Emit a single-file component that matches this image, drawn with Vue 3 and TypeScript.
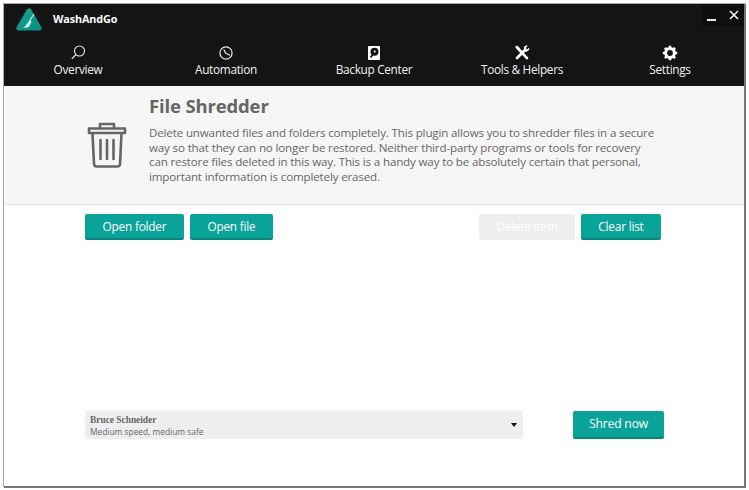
<script setup lang="ts">
interface NavItem { label: string; icon: string }
const nav: NavItem[] = [
  { label: 'Overview', icon: 'search' },
  { label: 'Automation', icon: 'clock' },
  { label: 'Backup Center', icon: 'disk' },
  { label: 'Tools & Helpers', icon: 'tools' },
  { label: 'Settings', icon: 'gear' },
]
</script>

<template>
  <div class="window">
    <header class="top">
      <div class="titlebar">
        <div class="brand">
          <svg class="logo" width="28" height="25" viewBox="0 0 28 25">
            <defs>
              <linearGradient id="lg" x1="0" y1="0" x2="1" y2="1">
                <stop offset="0" stop-color="#16a594"/>
                <stop offset="1" stop-color="#0b8a80"/>
              </linearGradient>
            </defs>
            <path d="M14 1.5 C15 1.5 15.8 2 16.4 3 L26.3 20 C27.4 22 26.4 23.5 24.3 23.5 L3.7 23.5 C1.6 23.5 .6 22 1.7 20 L11.6 3 C12.2 2 13 1.5 14 1.5Z" fill="url(#lg)"/>
            <path d="M19 7 L14.5 14" stroke="#d8f2ee" stroke-width="1.1"/>
            <path d="M14.5 13 L16.5 15 L14 20 L8 21 C10.5 19 12 17 14.5 13Z" fill="#d8f2ee"/>
          </svg>
          <span class="appname">WashAndGo</span>
        </div>
        <div class="winbtns">
          <button class="winbtn"><span class="minus"></span></button>
          <button class="winbtn">
            <svg width="10" height="10" viewBox="0 0 10 10"><path d="M1 1 L9 9 M9 1 L1 9" stroke="#fff" stroke-width="1.5"/></svg>
          </button>
        </div>
      </div>
      <nav class="nav">
        <div v-for="item in nav" :key="item.label" class="navitem">
          <svg class="navicon" width="18" height="18" viewBox="0 0 18 18">
            <template v-if="item.icon === 'search'">
              <circle cx="10.5" cy="7" r="5" fill="none" stroke="#e8e8e8" stroke-width="1.1"/>
              <path d="M7 10.5 L2.8 14.8" stroke="#e8e8e8" stroke-width="1.2"/>
            </template>
            <template v-else-if="item.icon === 'clock'">
              <circle cx="9" cy="9" r="6.1" fill="none" stroke="#e8e8e8" stroke-width="1.2"/>
              <path d="M6.8 5.6 L8.8 9.4 L13 11.2" fill="none" stroke="#e8e8e8" stroke-width="1.2"/>
            </template>
            <template v-else-if="item.icon === 'disk'">
              <rect x="3" y="2" width="12" height="14" rx=".8" fill="#fff"/>
              <circle cx="9.5" cy="7.8" r="4" fill="#111"/>
              <path d="M9 9 L5.5 13.5" stroke="#111" stroke-width="1.6"/>
              <circle cx="9.7" cy="7.6" r="1" fill="#fff"/>
            </template>
            <template v-else-if="item.icon === 'tools'">
              <path d="M4.5 4 L14 14.2" stroke="#fff" stroke-width="2.6" stroke-linecap="round"/>
              <path d="M2 3 L4 1.5 L7 4.2 L5 6Z" fill="#fff"/>
              <path d="M11.5 6.5 L4 14" stroke="#fff" stroke-width="2.8" stroke-linecap="round"/>
              <path d="M10.8 3.2 A3.4 3.4 0 0 1 14.8 1.8 L12.8 3.9 L14.2 5.4 L16.2 3.4 A3.4 3.4 0 0 1 11.6 7.4Z" fill="#fff"/>
            </template>
            <template v-else>
              <circle cx="9" cy="9" r="4.4" fill="none" stroke="#fff" stroke-width="3"/>
              <path d="M9 1.8 V16.2 M1.8 9 H16.2 M3.9 3.9 L14.1 14.1 M14.1 3.9 L3.9 14.1" stroke="#fff" stroke-width="2.6" stroke-dasharray="2.6 9.2"/>
            </template>
          </svg>
          <span class="navlabel">{{ item.label }}</span>
        </div>
      </nav>
    </header>

    <section class="intro">
      <svg class="trash" width="40" height="46" viewBox="0 0 40 46" fill="none" stroke="#666" stroke-width="2.6" stroke-linejoin="round" stroke-linecap="round">
        <path d="M2 8.5 V6.5 H38 V11 H2Z"/>
        <path d="M13 6 V2 H27 V6"/>
        <path d="M5.5 11.5 L7 42 Q7.2 44.5 9.5 44.5 H30.5 Q32.8 44.5 33 42 L34.5 11.5"/>
        <path d="M13.5 18 V37 M20 18 V37 M26.5 18 V37"/>
      </svg>
      <div class="introtext">
        <h1>File Shredder</h1>
        <p>Delete unwanted files and folders completely. This plugin allows you to shredder files in a secure<br>way so that they can no longer be restored. Neither third-party programs or tools for recovery<br>can restore files deleted in this way. This is a handy way to be absolutely certain that personal,<br>important information is completely erased.</p>
      </div>
    </section>

    <main class="content">
      <div class="toolbar">
        <div class="group">
          <button class="btn w-folder">Open folder</button>
          <button class="btn w-file">Open file</button>
        </div>
        <div class="group">
          <button class="btn disabled w-delete">Delete item</button>
          <button class="btn w-clear">Clear list</button>
        </div>
      </div>
      <div class="bottom">
        <div class="select">
          <div class="seltext">
            <strong>Bruce Schneider</strong>
            <span>Medium speed, medium safe</span>
          </div>
          <span class="caret"></span>
        </div>
        <button class="btn shred">Shred now</button>
      </div>
    </main>
  </div>
</template>

<style>
html, body { margin: 0; background: #fff; height: 490px; overflow: hidden; }
</style>

<style scoped>
.window {
  box-sizing: border-box;
  width: 740px;
  height: 482px;
  margin: 4px 0 0 4px;
  background: #fff;
  display: flex;
  flex-direction: column;
  font-family: "Open Sans", "Noto Sans", sans-serif;
  box-shadow: 1px 1px 0 1px #777, 0 0 0 1px #a8a8a8;
}
.top { height: 82px; background: #141414; color: #fff; display: flex; flex-direction: column; }
.titlebar { height: 36px; display: flex; justify-content: space-between; align-items: flex-start; }
.brand { display: flex; align-items: center; gap: 10px; padding: 3px 0 0 11px; }
.logo { display: block; }
.appname { font-size: 10.8px; font-weight: 700; letter-spacing: -.1px; margin-top: -3px; }
.winbtns { display: flex; }
.winbtn { width: 21px; height: 22px; background: #0e0e0e; border: 0; padding: 0; margin-left: 1px; display: flex; align-items: center; justify-content: center; }
.minus { width: 9px; height: 2px; background: #e8e8e8; margin-top: 10px; }
.nav { display: flex; }
.navitem { width: 148px; display: flex; flex-direction: column; align-items: center; }
.navicon { display: block; margin-top: 4px; }
.navlabel { font-size: 11.8px; line-height: 16px; margin-top: -1px; letter-spacing: -.3px; color: #f2f2f2; white-space: nowrap; }
.intro { box-sizing: border-box; height: 119px; background: #f6f6f6; border-bottom: 1px solid #e6e6e6; display: flex; }
.trash { margin: 36px 0 0 83px; }
.introtext { margin-left: 22px; }
h1 { margin: 7px 0 0; font-size: 18.5px; line-height: 26px; font-weight: 700; color: #666; letter-spacing: -.15px; }
p { margin: 7px 0 0; font-size: 11.6px; line-height: 14.5px; color: #666; white-space: nowrap; letter-spacing: -.16px; }
.content { flex: 1; display: flex; flex-direction: column; justify-content: space-between; padding: 9px 0 47px 81px; }
.toolbar { display: flex; justify-content: space-between; width: 576px; }
.group { display: flex; gap: 6px; }
.btn { box-sizing: border-box; height: 26px; border: 0; border-bottom: 2px solid #08857d; border-radius: 2px; background: #0aa39a; color: #fff; font: 400 11.8px "Open Sans", "Noto Sans", sans-serif; letter-spacing: -.2px; padding: 0 0 1px; }
.w-folder { width: 99px; }
.w-file { width: 83px; }
.w-delete { width: 96px; }
.w-clear { width: 80px; }
.disabled { background: #eeeeee; border-bottom-color: #eeeeee; color: #fff; }
.bottom { display: flex; align-items: center; width: 579px; justify-content: space-between; }
.select { box-sizing: border-box; width: 438px; height: 28px; background: #eeeeee; display: flex; align-items: center; justify-content: space-between; padding: 0 6px 0 5px; }
.seltext { display: flex; flex-direction: column; font-size: 8.4px; line-height: 11px; color: #666; padding-top: 1px; }
.seltext strong { font-weight: 700; font-family: "Liberation Serif", serif; font-size: 9.4px; }
.caret { width: 0; height: 0; border: 3.5px solid transparent; border-top: 4px solid #111; border-bottom: 0; }
.shred { width: 91px; height: 28px; font-size: 12.2px; }
</style>
